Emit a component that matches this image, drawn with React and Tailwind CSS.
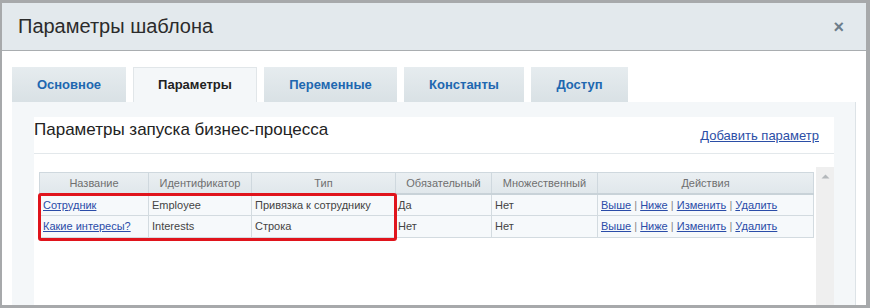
import React from 'react';

const tabs = [
  { label: 'Основное', w: 'w-[114px]' },
  { label: 'Параметры', w: 'w-[124px]', active: true },
  { label: 'Переменные', w: 'w-[133px]' },
  { label: 'Константы', w: 'w-[120px]' },
  { label: 'Доступ', w: 'w-[97px]' },
];

const cols = [
  { title: 'Название', w: 'w-[109px]' },
  { title: 'Идентификатор', w: 'w-[103px]' },
  { title: 'Тип', w: 'w-[144px]' },
  { title: 'Обязательный', w: 'w-[96px]' },
  { title: 'Множественный', w: 'w-[106px]' },
  { title: 'Действия', w: 'w-[216px]' },
];

const rows = [
  { name: 'Сотрудник', id: 'Employee', type: 'Привязка к сотруднику', req: 'Да', multi: 'Нет' },
  { name: 'Какие интересы?', id: 'Interests', type: 'Строка', req: 'Нет', multi: 'Нет' },
];

function Actions() {
  return (
    <span>
      <a href="#" className="text-[#2a4ca8] underline">Выше</a>
      <span className="text-[#888]"> | </span>
      <a href="#" className="text-[#2a4ca8] underline">Ниже</a>
      <span className="text-[#888]"> | </span>
      <a href="#" className="text-[#2a4ca8] underline">Изменить</a>
      <span className="text-[#888]"> | </span>
      <a href="#" className="text-[#2a4ca8] underline">Удалить</a>
    </span>
  );
}

export default function App() {
  return (
    <div className="w-[870px] h-[308px] overflow-hidden flex flex-col border-t-[3px] border-b-[3px] border-l-2 border-r-[4px] border-[#a7a9ab] bg-white font-['Liberation_Sans',Arial,sans-serif]">
      {/* Header */}
      <div className="h-[48px] shrink-0 flex items-center justify-between bg-[#e3e9ed] border-b border-[#a9adb0] pl-[16px] pr-[22px]">
        <h1 className="text-[20px] text-[#2b2b2b] leading-none pb-[2px]">Параметры шаблона</h1>
        <span className="text-[#6d7d8b] text-[18px] font-bold leading-none">×</span>
      </div>

      {/* Body */}
      <div className="flex-1 flex flex-col px-[10px] pt-[16px] min-h-0">
        {/* Tabs */}
        <div className="flex gap-[7px] h-[35px] shrink-0">
          {tabs.map((t) => (
            <div
              key={t.label}
              className={`${t.w} flex items-center justify-center text-[13px] font-bold ${
                t.active
                  ? 'bg-[#f4f7f9] text-[#222] border-t border-x border-[#e1e6e9]'
                  : 'bg-gradient-to-b from-[#e6ecef] to-[#d9e1e5] text-[#2067b0]'
              }`}
            >
              {t.label}
            </div>
          ))}
        </div>

        {/* Tab panel */}
        <div className="flex-1 bg-[#f4f7f9] border-r border-[#dde3e7] pl-[22px] pr-[21px] pt-[15px] min-h-0 flex flex-col">
          <div className="flex-1 bg-white flex flex-col min-h-0">
            <div className="h-[37px] shrink-0 flex items-start justify-between border-b border-[#e3e8eb] pr-[15px]">
              <h2 className="text-[17px] text-[#222] leading-none pt-[4px]">Параметры запуска бизнес-процесса</h2>
              <a href="#" className="text-[13px] text-[#2b4ea6] underline leading-none pt-[12px]">Добавить параметр</a>
            </div>

            <div className="flex-1 flex pt-[13px] min-h-0">
              <div className="flex-1 pl-[5px] pt-[5px] relative">
                <table className="border-collapse text-[11px] text-[#444] table-fixed">
                  <thead>
                    <tr className="h-[21px] bg-gradient-to-b from-[#eaeff2] to-[#e0e7eb]">
                      {cols.map((c) => (
                        <th
                          key={c.title}
                          className={`${c.w} font-normal text-[#6f6f6f] text-center border border-[#cfd8de] border-b-2 border-b-[#c8d2d8] p-0`}
                        >
                          {c.title}
                        </th>
                      ))}
                    </tr>
                  </thead>
                  <tbody>
                    {rows.map((r) => (
                      <tr key={r.id} className="h-[22px] bg-[#f6f9fb]">
                        <td className="border border-[#d3dbe0] px-[3px]">
                          <a href="#" className="text-[#2a4ca8] underline">{r.name}</a>
                        </td>
                        <td className="border border-[#d3dbe0] px-[3px]">{r.id}</td>
                        <td className="border border-[#d3dbe0] px-[3px]">{r.type}</td>
                        <td className="border border-[#d3dbe0] px-[2px]">{r.req}</td>
                        <td className="border border-[#d3dbe0] px-[3px]">{r.multi}</td>
                        <td className="border border-[#d3dbe0] px-[3px]"><Actions /></td>
                      </tr>
                    ))}
                  </tbody>
                </table>
                {/* highlight frame */}
                <div className="absolute left-[4px] top-[26px] w-[359px] h-[48px] border-[3px] border-[#e0141c] rounded-[3px]" />
              </div>
              <div className="w-[18px] shrink-0 bg-[#efefef] flex justify-center pt-[7px]">
                <svg width="9" height="5" viewBox="0 0 9 5">
                  <path d="M0.5 4.5 L4.5 0.5 L8.5 4.5 Z" fill="#b4b8bb" />
                </svg>
              </div>
            </div>
          </div>
        </div>
      </div>
    </div>
  );
}
